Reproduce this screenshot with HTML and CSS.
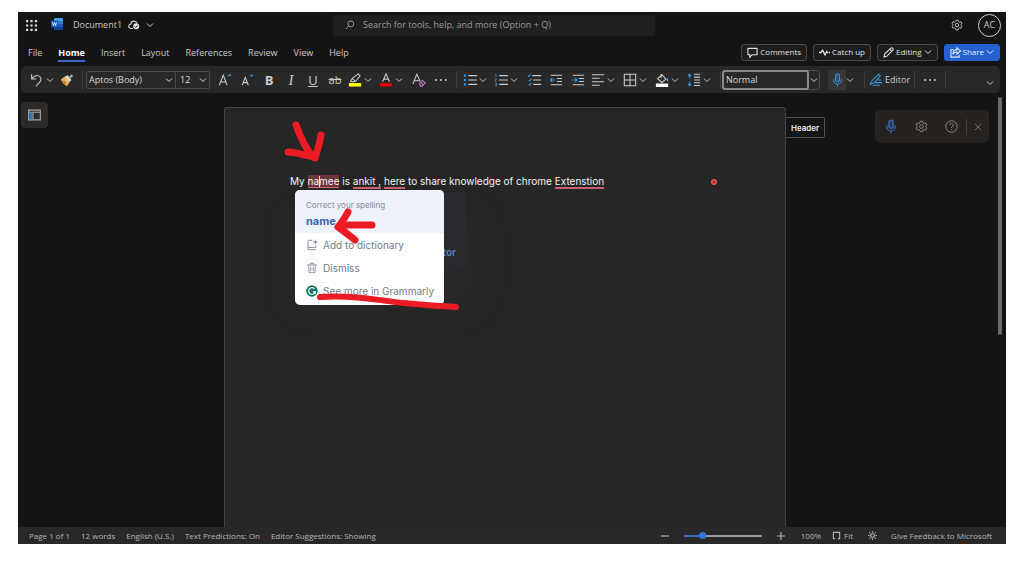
FILE: index.html
```html
<!DOCTYPE html>
<html lang="en">
<head>
<meta charset="utf-8">
<title>Document1</title>
<link rel="stylesheet" href="styles.css">
</head>
<body>
<svg class="sprite" aria-hidden="true">
  <symbol id="chev" viewBox="0 0 8 8"><path d="M1 2.500 4 5.500 7 2.500"/></symbol>
  <symbol id="mic" viewBox="0 0 12 16"><rect x="3.700" y="1" width="4.600" height="9" rx="2.300" fill="currentColor" fill-opacity=".35"/><path d="M1.500 7v1.200a4.500 4.500 0 0 0 9 0V7M6 12.700V15.300"/></symbol>
  <symbol id="gear" viewBox="0 0 16 16"><path d="M6.600 1.500h2.800l.5 2 1.400.8 2-.6 1.400 2.400-1.500 1.400v1l1.500 1.400-1.400 2.400-2-.6-1.400.8-.5 2H6.600l-.5-2-1.400-.8-2 .6-1.400-2.400 1.500-1.400v-1L1.300 6.100l1.400-2.400 2 .6 1.400-.8z"/><circle cx="8" cy="8" r="2.300"/></symbol>
</svg>
<div class="app">
  <header class="titlebar">
    <div class="brand">
      <button aria-label="Apps"><svg class="waffle" viewBox="0 0 12 12"><path d="M0 0h2.400v2.400H0zM4.800 0h2.400v2.400H4.800zM9.600 0H12v2.400H9.600zM0 4.800h2.400v2.400H0zM4.800 4.800h2.400v2.400H4.800zM9.600 4.800H12v2.400H9.600zM0 9.600h2.400V12H0zM4.800 9.600h2.400V12H4.800zM9.600 9.600H12V12H9.600z"/></svg></button>
      <svg class="word" viewBox="0 0 12 12"><rect x="3" y="0" width="9" height="12" rx="1" fill="#41a5ee"/><path d="M3 3h9v3H3z" fill="#2b7cd3"/><path d="M3 6h9v3H3z" fill="#185abd"/><path d="M3 9h9v2a1 1 0 0 1-1 1H4a1 1 0 0 1-1-1z" fill="#103f91"/><rect x="0" y="2.500" width="7" height="7" rx=".8" fill="#185abd"/><path d="m1.500 4.300.9 3.400 1.100-3.200 1.100 3.200.9-3.400" fill="none" stroke="#fff" stroke-width=".8"/></svg>
      <button class="doc-name"><span>Document1</span>
        <svg class="cloud" viewBox="0 0 12 10"><path d="M5 8.500H3a2.200 2.200 0 0 1-.2-4.400A3.200 3.200 0 0 1 9 3.300" class="line"/><circle cx="8.200" cy="6.300" r="3" fill="#e6e6e6"/><path d="m6.700 6.400 1.100 1.100 2-2.200" fill="none" stroke="#141414"/></svg>
        <svg class="chev"><use href="#chev"/></svg></button>
    </div>
    <label class="search"><svg class="line" viewBox="0 0 12 12"><circle cx="7" cy="4.700" r="3.500"/><path d="M4.400 7.300.8 11"/></svg><input type="text" placeholder="Search for tools, help, and more (Option + Q)" aria-label="Search"></label>
    <div class="account">
      <button aria-label="Settings"><svg class="gear"><use href="#gear"/></svg></button>
      <button class="avatar">AC</button>
    </div>
  </header>

  <div class="tabrow">
    <nav class="tabs">
      <button>File</button><button class="active">Home</button><button>Insert</button><button>Layout</button><button>References</button><button>Review</button><button>View</button><button>Help</button>
    </nav>
    <div class="actions">
      <button class="pill"><svg class="line" viewBox="0 0 12 12"><path d="M1 1.500h10v7H5.500L3 11V8.500H1z"/></svg>Comments</button>
      <button class="pill"><svg class="line" viewBox="0 0 12 12"><path d="M0 6h2L4 3.500l2.500 5L8.500 5l1 1.500M10.500 6H12" stroke-width="1.500"/></svg>Catch up</button>
      <button class="pill"><svg class="line" viewBox="0 0 12 12"><path d="m1 11 .8-3.200L8.500 1.200a1.400 1.400 0 0 1 2.200 2.200L4.100 10.200zM7.400 2.300l2.300 2.300"/></svg>Editing<svg class="chev"><use href="#chev"/></svg></button>
      <button class="pill primary"><svg class="line" viewBox="0 0 12 12"><path d="M4 3H1v8h9V8.500M7.500 1l4 3.300-4 3.300V5.500C5.500 5.500 4 6.500 3.300 8 3.300 5 5 3 7.500 2.900z"/></svg>Share<svg class="chev"><use href="#chev"/></svg></button>
    </div>
  </div>

  <div class="ribbon" role="toolbar" aria-label="Home">
    <div class="split undo"><button aria-label="Undo"><svg class="line" viewBox="0 0 16 16"><path d="M3 1.500v5.300h5.300M3.300 6.500C6.500 2.800 9 2.500 11 3.300c3 1.300 3.500 4.700 1.500 6.900L8 15"/></svg></button><button class="drop" aria-label="Undo options"><svg class="chev"><use href="#chev"/></svg></button></div>
    <button class="tool" aria-label="Format painter"><svg viewBox="0 0 16 16"><path d="m1 7 5.500-3.500 5 6L8 15C5 13.500 2.500 11 1 7z" fill="#e8b45a"/><path d="m3 9.500 3 1M5 12l2-1" stroke="#7a5520" fill="none"/><path d="m6 4.500 2.500-2.300L13 8l-2.500 2.200z" fill="#ddd"/><path d="m10 4.500 3.500-3 1.500 1.800-3.500 3.200z" fill="#aaa"/></svg></button>
    <span class="sep"></span>
    <label class="combo family"><select aria-label="Font"><option>Aptos (Body)</option></select><svg class="chev"><use href="#chev"/></svg></label>
    <label class="combo size"><select aria-label="Font size"><option>12</option></select><svg class="chev"><use href="#chev"/></svg></label>
    <button class="tool" aria-label="Grow font"><svg class="line" viewBox="0 0 16 16"><path d="M1.500 14 6 2.500 10.500 14M3 10.300h6"/><path d="m11.500 3.500 1.700-1.700 1.700 1.700" stroke="#3a96dd"/></svg></button>
    <button class="tool" aria-label="Shrink font"><svg class="line" viewBox="0 0 16 16"><path d="M2.500 14 6 5l3.500 9M3.700 11h4.600"/><path d="M11.500 2l1.700 1.700L14.900 2" stroke="#3a96dd"/></svg></button>
    <button class="tool glyph b">B</button>
    <button class="tool glyph i">I</button>
    <button class="tool glyph u">U</button>
    <button class="tool glyph s">ab</button>
    <div class="split"><button aria-label="Highlight"><svg class="line" viewBox="0 0 16 16"><path d="m3 9.500 2-3.300L11.500 1l2.300 2.300-5 6.200-3 .8zM5 6.500l3.500 3"/><path d="M1 11.500h14V15.500H1z" fill="#ffff00" stroke="none"/></svg></button><button class="drop" aria-label="Highlight colors"><svg class="chev"><use href="#chev"/></svg></button></div>
    <div class="split"><button aria-label="Font color"><svg class="line" viewBox="0 0 16 16"><path d="M4 10 8 .8 12 10M5.400 7h5.200"/><path d="M1 11.500h14V15.500H1z" fill="#e00000" stroke="none"/></svg></button><button class="drop" aria-label="Font colors"><svg class="chev"><use href="#chev"/></svg></button></div>
    <button class="tool" aria-label="Clear formatting"><svg class="line" viewBox="0 0 16 16"><path d="m1 12.500 4.500-11 3.700 8M2.600 8.800h5.800"/><path d="m8.500 12 3.500-3.500 3 3-3.500 3.500H10zM10 10.500l3 3" stroke="#c678cf"/></svg></button>
    <button class="tool" aria-label="More font options"><svg class="dots" viewBox="0 0 16 16"><circle cx="2.500" cy="8" r="1.200"/><circle cx="8" cy="8" r="1.200"/><circle cx="13.500" cy="8" r="1.200"/></svg></button>
    <span class="sep"></span>
    <div class="split"><button aria-label="Bullets"><svg class="line" viewBox="0 0 16 16"><path d="M6 3h10M6 8h10M6 13h10"/><path d="M1 1.800h2.400v2.400H1zM1 6.800h2.400v2.400H1zM1 11.800h2.400v2.400H1z" fill="#3a96dd" stroke="none"/></svg></button><button class="drop" aria-label="Bullet styles"><svg class="chev"><use href="#chev"/></svg></button></div>
    <div class="split"><button aria-label="Numbering"><svg class="line" viewBox="0 0 16 16"><path d="M6 3h10M6 8h10M6 13h10"/><path d="m1 2 1.300-.7v3.400M1 6.500h2L1 9.500h2M1 11.500h2v3H1M1.500 13H3" stroke="#3a96dd" stroke-width=".8"/></svg></button><button class="drop" aria-label="Number styles"><svg class="chev"><use href="#chev"/></svg></button></div>
    <button class="tool" aria-label="Multilevel list"><svg class="line" viewBox="0 0 16 16"><path d="M6 3h10M7 8h9M7 13h9"/><path d="m1 3 1 1 2-2.500M2 8l1 1 2-2.500M2 13l1 1 2-2.500" stroke="#3a96dd"/></svg></button>
    <button class="tool" aria-label="Decrease indent"><svg class="line" viewBox="0 0 16 16"><path d="M2 2.500h13M9 6.200h6M9 9.800h6M2 13.500h13"/><path d="M7.500 8H1.500M4 5.500 1.500 8 4 10.500" stroke="#3a96dd"/></svg></button>
    <button class="tool" aria-label="Increase indent"><svg class="line" viewBox="0 0 16 16"><path d="M2 2.500h13M9 6.200h6M9 9.800h6M2 13.500h13"/><path d="M1 8h6M4.500 5.500 7 8l-2.500 2.500" stroke="#3a96dd"/></svg></button>
    <div class="split wide"><button aria-label="Align"><svg class="line" viewBox="0 0 16 16"><path d="M1 2h14M1 6h9M1 10h14M1 14h9"/></svg></button><button class="drop" aria-label="Alignment options"><svg class="chev"><use href="#chev"/></svg></button></div>
    <div class="split wide"><button aria-label="Borders"><svg class="line" viewBox="0 0 16 16"><path d="M1.500 1.500h13v13h-13zM8 1.500v13M1.500 8h13"/></svg></button><button class="drop" aria-label="Border options"><svg class="chev"><use href="#chev"/></svg></button></div>
    <div class="split wide"><button aria-label="Shading"><svg class="line" viewBox="0 0 16 16"><path d="M3 6.500 8 2l4.500 5-4.700 3.800zM7 1v5"/><path d="M13.500 6c1 1.500 1.300 2.500.8 3.500" stroke="#3a96dd" stroke-width="2"/><path d="M1 12h14V16H1z" fill="#fff" stroke="none"/></svg></button><button class="drop" aria-label="Shading colors"><svg class="chev"><use href="#chev"/></svg></button></div>
    <div class="split"><button aria-label="Line spacing"><svg class="line" viewBox="0 0 16 16"><path d="M8 1.500h7M8 4.700h7M8 7.900h7M8 11.100h7M8 14.300h7"/><path d="M3 1.500v5M1 3.500l2-2 2 2M3 9.500v5M1 12.500l2 2 2-2" stroke="#3a96dd"/></svg></button><button class="drop" aria-label="Spacing options"><svg class="chev"><use href="#chev"/></svg></button></div>
    <span class="sep"></span>
    <label class="combo style"><select aria-label="Style"><option>Normal</option></select><svg class="chev"><use href="#chev"/></svg></label>
    <div class="split dictate"><button aria-label="Dictate"><svg class="mic"><use href="#mic"/></svg></button><button class="drop" aria-label="Dictation options"><svg class="chev"><use href="#chev"/></svg></button></div>
    <span class="sep"></span>
    <button class="editor"><svg class="line" viewBox="0 0 16 16"><path d="M1 13.500 4 8l7-6.500 2 2L6 11l-5 2.500M7 11h8M4 14h8.500M10 8h4" stroke="#3a96dd"/></svg>Editor</button>
    <span class="sep"></span>
    <button class="tool" aria-label="More"><svg class="dots" viewBox="0 0 16 16"><circle cx="2.500" cy="8" r="1.200"/><circle cx="8" cy="8" r="1.200"/><circle cx="13.500" cy="8" r="1.200"/></svg></button>
    <span class="sep"></span>
    <button class="collapse" aria-label="Collapse ribbon"><svg class="chev"><use href="#chev"/></svg></button>
  </div>

  <main class="canvas">
    <aside>
      <button class="navpane" aria-label="Navigation"><svg viewBox="0 0 14 12"><path d="M.7.700h12.600v10.600H.7zM.7 3h12.600" fill="none" stroke="#a9a39c" stroke-width="1.200"/><path d="M1.500 3.500H5v7.200H1.500z" fill="#1f7fd0"/><path d="M5.500 3v8" stroke="#a9a39c"/></svg></button>
    </aside>
    <article class="page">
      <div class="behind"><a href="#">tor</a></div>
      <p class="text">My <mark>na<i class="caret"></i>mee</mark> is <u>ankit ,</u> <u>here</u> to share knowledge of chrome <u>Extenstion</u></p>
      <span class="issue"></span>
      <div class="popup">
        <button class="suggest"><small>Correct your spelling</small><strong>name</strong></button>
        <button class="option"><svg class="grey" viewBox="0 0 14 14"><path d="M7.500 1.500H3.300a1 1 0 0 0-1 1V10H10M11.500 7.500V10H10M2.300 10v1.500a1 1 0 0 0 1 1h8M11 1v5M8.500 3.500h5"/></svg>Add to dictionary</button>
        <button class="option"><svg class="grey" viewBox="0 0 14 14"><path d="M1.500 3.500h11M5 3.300V1.300h4v2M3 3.500l.6 9h6.800l.6-9M5.500 5.500v5M8.500 5.500v5"/></svg>Dismiss</button>
        <button class="option"><svg viewBox="0 0 14 14"><circle cx="7" cy="7" r="6.800" fill="#0c7a62"/><path d="M10 4.500A3.900 3.900 0 1 0 10.800 8H8M10.800 8v2.800" fill="none" stroke="#fff" stroke-width="1.400"/></svg>See more in Grammarly</button>
      </div>
      <svg class="ink" viewBox="0 0 180 196" aria-hidden="true"><path d="M15 9C19 20 25 33 32 41M40 19C39 27 36 35 34 42M7 36C16 36 24 40 34 41"/><path d="M91 109H60M67 96C64 102 60 107 57 111 63 115 69 120 74 124"/><path d="M39 181C80 179 100 185 122 187 143 189 160 190 175 191" class="stroke-thin"/></svg>
    </article>
    <aside class="right">
      <button class="header-tag">Header</button>
      <div class="voice">
        <button aria-label="Microphone"><svg class="mic"><use href="#mic"/></svg></button>
        <button aria-label="Voice settings"><svg class="gear"><use href="#gear"/></svg></button>
        <button aria-label="Help"><svg class="line" viewBox="0 0 16 16"><circle cx="8" cy="8" r="7"/><path d="M5.800 6.300C5.800 3.200 10.300 3.500 10.200 6.300 10.100 7.800 8 7.900 8 9.800M8 11.200v1"/></svg></button>
        <button class="close" aria-label="Close"><svg class="line" viewBox="0 0 16 16"><path d="m3 3 10 10M13 3 3 13"/></svg></button>
      </div>
      <div class="scroll"></div>
    </aside>
  </main>

  <footer class="status">
    <span>Page 1 of 1</span><span>12 words</span><span>English (U.S.)</span><span>Text Predictions: On</span><span>Editor Suggestions: Showing</span>
    <div class="zoom">
      <button aria-label="Zoom out"><svg class="line" viewBox="0 0 8 8"><path d="M0 4h8"/></svg></button>
      <input type="range" min="0" max="100" value="21" aria-label="Zoom">
      <button aria-label="Zoom in"><svg class="line" viewBox="0 0 8 8"><path d="M0 4h8M4 0v8"/></svg></button>
    </div>
    <button class="percent">100%</button>
    <button class="fit"><svg class="line" viewBox="0 0 10 10"><path d="M3.500 8.500H1M1.500 8.500v-7h7v7M9 8.500H6.500"/></svg>Fit</button>
    <button class="display" aria-label="Display"><svg class="line" viewBox="0 0 10 10"><circle cx="5" cy="5" r="2"/><path d="M5 0v1.700M5 8.300V10M0 5h1.700M8.300 5H10M1.500 1.500l1.100 1.100M7.400 7.400l1.100 1.100M8.500 1.500 7.400 2.600M2.600 7.400 1.500 8.500"/></svg></button>
    <button class="feedback">Give Feedback to Microsoft</button>
  </footer>
</div>
</body>
</html>
```
FILE: styles.css
```css
* { box-sizing: border-box; }
body {
  margin: 0;
  padding: 12px 18px 32px;
  min-height: 100vh;
  display: flex;
  background: #fff;
  font: 9px/12px "Open Sans", "Noto Sans", sans-serif;
  color: #cacaca;
}
button, input, select {
  font: inherit;
  color: inherit;
  background: none;
  border: 0;
  padding: 0;
  margin: 0;
}
button { display: flex; align-items: center; justify-content: center; }
.sprite { position: absolute; width: 0; height: 0; }
svg { display: block; flex: none; overflow: visible; }
.line, .chev, .gear, .mic { fill: none; stroke: currentColor; stroke-width: 1.2; }
.chev { width: 8px; height: 8px; stroke-width: 1; }

.app {
  flex: 1;
  min-width: 0;
  display: flex;
  flex-direction: column;
  background: #141414;
}

.titlebar {
  display: grid;
  grid-template-columns: 307fr minmax(0, 322fr) 346fr;
  align-items: center;
  height: 26px;
  padding: 0 5px 0 8px;
}
.brand { display: flex; align-items: center; }
.waffle { width: 11px; height: 11px; fill: #ddd; }
.word { width: 12px; height: 12px; margin: 0 10px 2px 14px; }
.doc-name { gap: 6px; white-space: nowrap; }
.cloud { width: 12px; height: 10px; }
.search {
  display: flex;
  align-items: center;
  gap: 8px;
  height: 21px;
  padding: 0 12px;
  border-radius: 2px;
  background: #1f1f1f;
  color: #9a9a9a;
}
.search svg { width: 10px; height: 10px; }
.search input { flex: 1; min-width: 0; }
.search input::placeholder { color: #9a9a9a; opacity: 1; }
.account { display: flex; align-items: center; justify-content: flex-end; gap: 15px; }
.gear { width: 12px; height: 12px; }
.avatar { width: 23px; height: 23px; border: 1px solid #d0d0d0; border-radius: 50%; }

.tabrow {
  display: flex;
  justify-content: space-between;
  align-items: center;
  height: 28px;
  padding: 0 6px 0 10px;
}
.tabs { display: flex; gap: 16px; }
.tabs button { height: 20px; border-bottom: 2px solid transparent; padding-top: 3px; }
.tabs .active { font-weight: 700; color: #fff; border-color: #3e68c9; }
.actions { display: flex; gap: 6px; font-size: 8px; }
.pill {
  height: 17px;
  padding: 0 5px;
  gap: 2px;
  border: 1px solid #4a4a4a;
  border-radius: 3px;
  background: #1d1d1d;
  color: #e0e0e0;
}
.pill svg { width: 11px; height: 11px; }
.pill .chev { width: 8px; height: 8px; }
.primary { background: #2560d0; border-color: #2560d0; color: #e4ecff; }

.ribbon {
  display: flex;
  align-items: center;
  height: 27px;
  margin: 0 6px 0 3px;
  padding: 0 6px;
  border-radius: 5px;
  background: #282828;
}
.ribbon svg { width: 14px; height: 14px; }
.ribbon .chev { width: 8px; height: 8px; }
.ribbon .sep { width: 1px; height: 18px; margin: 0 4px; background: #3c3c3c; }
.tool { width: 22px; height: 20px; }
.split { display: flex; width: 26px; margin-right: 5px; }
.split button { width: 18px; height: 20px; }
.split .drop { width: 8px; }
.split.wide { margin-right: 6px; }
.split.undo { gap: 1px; width: 27px; margin-right: 2px; }
.glyph { font-size: 13px; line-height: 16px; }
.b { font-weight: 700; }
.i { font-family: "Liberation Serif", serif; font-style: italic; font-size: 15px; }
.u { text-decoration: underline; }
.s { text-decoration: line-through; font-size: 11px; }
.dots { fill: currentColor; }
.combo { display: grid; align-items: center; height: 18px; border: 1px solid #4c4c4c; color: #d8d8d8; }
.combo select { grid-area: 1 / 1; width: 100%; height: 100%; padding: 0 2px; appearance: none; outline: 0; }
.combo .chev { grid-area: 1 / 1; justify-self: end; margin-right: 2px; pointer-events: none; }
.family { width: 90px; margin-left: -1px; border-radius: 2px 0 0 2px; }
.size { width: 35px; margin: 0 4px 0 -1px; border-radius: 0 2px 2px 0; }
.size select { padding-left: 4px; }
.ribbon .style { grid-template-columns: 1fr 11px; width: 98px; height: 20px; margin: 0 8px 0 -3px; border-radius: 3px; }
.style select { align-self: stretch; height: auto; margin: -1px; width: auto; border: 2px solid #8a8a8a; border-radius: 3px; }
.style .chev { grid-area: 1 / 2; margin-right: 1px; }
.mic { color: #3a86d8; }
.ribbon .mic { width: 11px; height: 14px; }
.dictate { width: 27px; }
.dictate button:first-child { background: #363636; }
.editor { gap: 2px; }
.collapse { margin: 6px 0 0 auto; }

.canvas {
  flex: 1;
  display: grid;
  grid-template-columns: 206fr 562fr 220fr;
  padding-top: 14px;
}
.navpane {
  width: 27px;
  height: 26px;
  margin: -5px 0 0 3px;
  border-radius: 4px;
  background: #2d2b2a;
}
.navpane svg { width: 13px; height: 12px; }
.page {
  position: relative;
  padding: 66px 66px 0 65px;
  border: 1px solid #444;
  border-bottom: 0;
  border-radius: 3px 3px 0 0;
  background: #262626;
}
.text {
  position: relative;
  margin: 0;
  color: #f2f2f2;
  font: 10px/14px Inter, "Liberation Sans", sans-serif;
  white-space: nowrap;
}
.text mark { background: #6d343b; color: inherit; border-bottom: 1px solid #d2697a; }
.text u { text-decoration: none; border-bottom: 2px solid #c9606f; }
.caret { display: inline-block; width: 1px; height: 11px; margin-right: -1px; background: #ddd; vertical-align: -2px; }
.issue {
  position: absolute;
  top: 71px;
  right: 68px;
  width: 6px;
  height: 6px;
  border: 1px solid #ff6d6d;
  border-radius: 50%;
  background: #c52f35;
}
.behind {
  position: absolute;
  top: 84px;
  left: 80px;
  width: 161px;
  height: 75px;
  padding: 53px 10px 0;
  text-align: right;
  background: #2a2a2e;
  box-shadow: 0 30px 36px 6px rgba(48, 48, 58, .35);
}
.behind a { color: #5c82d6; font: 600 10px/14px Inter, sans-serif; text-decoration: none; }
.popup {
  position: absolute;
  top: 82px;
  left: 70px;
  width: 149px;
  padding-bottom: 3px;
  border-radius: 5px;
  background: #fff;
  color: #757b8a;
  font: 10px/14px Inter, "Liberation Sans", sans-serif;
  overflow: hidden;
}
.popup button { width: 100%; justify-content: flex-start; }
.popup .suggest {
  flex-direction: column;
  align-items: flex-start;
  gap: 2px;
  padding: 9px 11px 4px;
  background: #eef2fd;
}
.suggest small { font-size: 8px; line-height: 12px; color: #83889a; }
.suggest strong { font-size: 11px; line-height: 16px; color: #3c62bd; }
.popup .option { height: 23px; padding: 0 11px; gap: 5px; white-space: nowrap; }
.option svg { width: 12px; height: 12px; }
.grey { fill: none; stroke: #777d88; }
.ink {
  position: absolute;
  top: 8px;
  left: 56px;
  width: 180px;
  height: 196px;
  fill: none;
  stroke: #ed1c24;
  stroke-width: 7;
  stroke-linecap: round;
  stroke-linejoin: round;
  pointer-events: none;
}
.ink .stroke-thin { stroke-width: 6; }

.right { display: flex; align-items: flex-start; justify-content: space-between; }
.header-tag {
  height: 21px;
  margin-top: 10px;
  padding: 0 5px;
  border: 1px solid #505050;
  border-left: 0;
  border-radius: 0 2px 2px 0;
  color: #f0f0f0;
  font: 600 8px/12px Inter, sans-serif;
}
.voice {
  display: flex;
  align-items: center;
  height: 33px;
  margin: 3px 9px 0 auto;
  padding-left: 1px;
  border-radius: 5px;
  background: #25221f;
  color: #8b8885;
}
.voice button { width: 30px; height: 16px; }
.voice svg { width: 13px; height: 13px; }
.voice .mic { height: 15px; width: 12px; color: #3c6cc4; }
.voice .close { width: 23px; border-left: 1px solid #45413e; }
.voice .close svg { width: 10px; height: 10px; }
.scroll { width: 4px; height: 238px; margin: -10px 4px 0 0; border-radius: 2px; background: #6b6b6b; }

.status {
  display: flex;
  align-items: center;
  gap: 11px;
  height: 17px;
  padding: 0 14px 0 11px;
  background: #282828;
  color: #b5b5b5;
  font-size: 8px;
  white-space: nowrap;
}
.zoom { display: flex; align-items: center; gap: 15px; margin-left: auto; margin-right: 5px; }
.zoom svg { width: 8px; height: 8px; }
.zoom input {
  width: 78px;
  height: 2px;
  appearance: none;
  border-radius: 1px;
  background: linear-gradient(90deg, #2f6fce 22%, #999 22%);
}
.zoom input::-webkit-slider-thumb { appearance: none; width: 7px; height: 7px; border-radius: 50%; background: #3376dc; }
.fit { gap: 3px; }
.display { margin: 0 3px 0 4px; }
.status > button svg { width: 9px; height: 9px; }
```
